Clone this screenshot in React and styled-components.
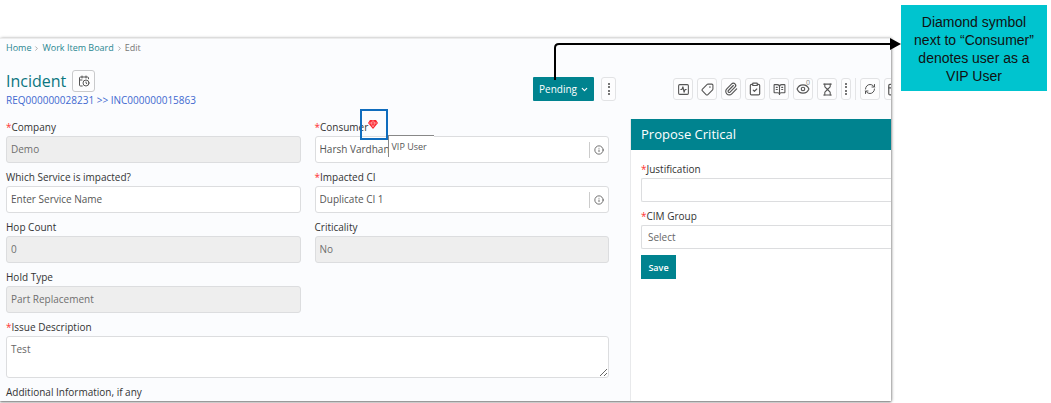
import React from 'react';
import styled, { createGlobalStyle } from 'styled-components';
import {
  SquareActivity, Tag, Paperclip, ClipboardCheck, BookOpenText, Eye, Hourglass,
  RefreshCw, CalendarDays, CalendarClock, ChevronDown, ChevronRight, Info,
} from 'lucide-react';

const teal = '#00838f';

const GlobalStyle = createGlobalStyle`
  * { box-sizing: border-box; }
  body { margin: 0; background: #fff; }
  body, input, textarea, select, button { font-family: "Open Sans", "Noto Sans", sans-serif; font-size: 10px; }
`;

const Page = styled.div`
  position: relative;
  display: grid;
  grid-template-columns: minmax(0, 1fr) 160px;
  align-items: start;
  overflow: hidden;
  padding-bottom: 2px;
`;

const Card = styled.main`
  margin-top: 38px;
  background: #fbfcfe;
  border-top: 1px solid #ececec;
  box-shadow: 0 1px 2px #777, 1px 0 3px #bbb;
  overflow: hidden;
`;

const Breadcrumb = styled.nav`
  display: flex;
  align-items: center;
  gap: 2px;
  padding: 2px 6px 0;
  line-height: 14px;
  font-size: 9px;
  color: #777;
`;

const Crumb = styled.a`
  color: #2a8791;
  text-decoration: none;
`;

const Header = styled.header`
  display: flex;
  align-items: flex-start;
  padding: 15px 0 11px 6px;
`;

const Heading = styled.div`
  flex: 1;
`;

const TitleRow = styled.div`
  display: flex;
  align-items: center;
  gap: 6px;
  height: 22px;
`;

const Title = styled.h1`
  margin: 0;
  font-size: 16px;
  font-weight: 400;
  color: #0b7680;
`;

const Reference = styled.a`
  display: block;
  line-height: 16px;
  color: #4169d0;
  text-decoration: none;
`;

const IconButton = styled.button`
  position: relative;
  display: flex;
  flex: none;
  align-items: center;
  justify-content: center;
  width: ${(p) => p.$width || 20}px;
  height: ${(p) => p.$height || 22}px;
  padding: 0;
  color: #555;
  background: #fdfdfe;
  border: 1px solid ${(p) => p.$border || '#e2e3e5'};
  border-radius: 3px;
`;

const StatusActions = styled.div`
  display: flex;
  gap: 7px;
  padding-top: 7px;
`;

const StatusButton = styled.button`
  display: flex;
  align-items: center;
  justify-content: space-between;
  width: 61px;
  height: 24px;
  padding: 0 5px 0 6px;
  color: #fff;
  background: ${teal};
  border: 0;
  border-radius: 1px;
  font-weight: 500;
`;

const Tools = styled.div`
  display: flex;
  gap: 4px;
  width: 218px;
  margin-left: 57px;
  padding-top: 8px;
  overflow: hidden;
`;

const Divider = styled.span`
  flex: none;
  width: 1px;
  background: #e4e5e7;
`;

const Count = styled.span`
  position: absolute;
  top: 0;
  right: 2px;
  font-size: 7px;
  line-height: 8px;
  color: #888;
`;

const Body = styled.div`
  display: flex;
`;

const Form = styled.form`
  display: grid;
  flex: 1;
  grid-template-columns: 1fr 1fr;
  gap: 6px 14px;
  padding: 0 21px 0 6px;
`;

const Field = styled.div`
  position: relative;
  grid-column: ${(p) => (p.$wide ? '1 / -1' : p.$first ? '1' : 'auto')};
`;

const Label = styled.label`
  display: flex;
  height: 17px;
  line-height: 16px;
  color: #333;
`;

const Star = styled.span`
  color: #f33;
`;

const Input = styled.input`
  display: block;
  width: 100%;
  height: 27px;
  padding: 0 4px 2px;
  color: #555;
  background: #fff;
  border: 1px solid #dcdddf;
  border-radius: 3px;
  &:disabled { background: #eee; color: #6e6e6e; }
`;

const LookupBox = styled.div`
  display: flex;
  align-items: center;
  height: 27px;
  background: #fff;
  border: 1px solid #dcdddf;
  border-radius: 3px;
`;

const LookupInput = styled.input`
  flex: 1;
  min-width: 0;
  padding: 0 4px 2px;
  color: #555;
  background: none;
  border: 0;
`;

const LookupButton = styled.button`
  display: flex;
  align-items: center;
  justify-content: center;
  width: 19px;
  height: 16px;
  padding: 0;
  color: #555;
  background: none;
  border: 0;
  border-left: 1px solid #ccc;
`;

const Area = styled.textarea`
  display: block;
  width: 100%;
  height: 42px;
  padding: 5px 4px;
  color: #666;
  background: #fff;
  border: 1px solid #dcdddf;
  border-radius: 3px;
`;

const Vip = styled.span`
  position: relative;
  display: flex;
  height: 12px;
`;

const Highlight = styled.span`
  position: absolute;
  inset: -10px -10px -9px -8px;
  border: 2px solid #0f6cbd;
  z-index: 2;
`;

const Tooltip = styled.span`
  position: absolute;
  top: 16px;
  left: 73px;
  z-index: 1;
  width: 46px;
  height: 22px;
  padding-left: 3px;
  line-height: 22px;
  font-size: 9px;
  color: #555;
  background: #fff;
  border-top: 1px solid #888;
  border-left: 1px solid #888;
`;

const Panel = styled.aside`
  width: 261px;
  background: #fff;
  border-left: 1px solid #e8e9eb;
`;

const PanelTitle = styled.h2`
  margin: 0;
  padding-left: 10px;
  font-size: 13px;
  font-weight: 400;
  line-height: 31px;
  color: #fff;
  background: ${teal};
`;

const PanelForm = styled.form`
  display: grid;
  gap: 6px;
  padding: 11px 0 0 10px;
`;

const PanelInput = styled.input`
  display: block;
  width: 100%;
  height: 24px;
  background: #fff;
  border: 1px solid #dcdddf;
  border-right: 0;
  border-radius: 2px 0 0 2px;
`;

const PanelSelect = styled.select`
  display: block;
  width: 100%;
  height: 24px;
  padding: 0 6px;
  appearance: none;
  color: #666;
  background: #fff;
  border: 1px solid #dcdddf;
  border-right: 0;
  border-radius: 2px 0 0 2px;
`;

const SaveButton = styled.button`
  justify-self: start;
  width: 35px;
  height: 24px;
  padding: 0;
  font-size: 9px;
  font-weight: 600;
  color: #fff;
  background: ${teal};
  border: 0;
`;

const Callout = styled.aside`
  margin: 5px 4px 0 10px;
  padding: 8px 12px 6px;
  font-family: "Liberation Sans", Arial, sans-serif;
  font-size: 14px;
  line-height: 18px;
  text-align: center;
  color: #111;
  background: #00c4cf;
`;

const Arrow = styled.svg`
  position: absolute;
  top: 36px;
  right: 150px;
  z-index: 3;
  pointer-events: none;
`;

function Gem() {
  return (
    <svg width="10" height="12" viewBox="0 0 20 24" role="img" aria-label="VIP">
      <path d="M4 2h12l4 6-10 12L0 8z" fill="#fb2530" />
      <path d="M2 8h16M6 8l4-5 4 5-4 8z" fill="none" stroke="#ffb0b0" strokeWidth="1.4" />
    </svg>
  );
}

function Dots() {
  return (
    <svg width="4" height="14" viewBox="0 0 4 14" fill="#777" aria-hidden="true">
      <path d="M1 1h2v2H1zM1 4h2v2H1zM1 8h2v2H1zM1 11h2v2H1z" />
    </svg>
  );
}

function TextField({ id, label, value, required, disabled, first }) {
  return (
    <Field $first={first}>
      <Label htmlFor={id}>{required && <Star>*</Star>}{label}</Label>
      <Input id={id} defaultValue={value} disabled={disabled} />
    </Field>
  );
}

function LookupField({ id, label, value, vip }) {
  return (
    <Field>
      <Label htmlFor={id}>
        <Star>*</Star>{label}
        {vip && <Vip><Gem /><Highlight /></Vip>}
      </Label>
      <LookupBox>
        <LookupInput id={id} defaultValue={value} />
        <LookupButton type="button" aria-label={`${label} details`}><Info size={10} /></LookupButton>
      </LookupBox>
      {vip && <Tooltip role="tooltip">VIP User</Tooltip>}
    </Field>
  );
}

const tools = [
  ['Activity', <SquareActivity size={13} />],
  ['Tags', <Tag size={13} transform="scale(-1 1)" />],
  ['Attachments', <Paperclip size={14} />],
  ['Tasks', <ClipboardCheck size={14} />],
  ['Knowledge', <BookOpenText size={13} />],
  ['Watchers', <><Eye size={14} /><Count>0</Count></>],
  ['Pending time', <Hourglass size={13} />],
];

export default function App() {
  return (
    <Page>
      <GlobalStyle />
      <Card>
        <Breadcrumb aria-label="Breadcrumb">
          <Crumb href="#home">Home</Crumb><ChevronRight size={7} />
          <Crumb href="#board">Work Item Board</Crumb><ChevronRight size={7} />
          <span>Edit</span>
        </Breadcrumb>
        <Header>
          <Heading>
            <TitleRow>
              <Title>Incident</Title>
              <IconButton $width={23} $border="#c9cacc" aria-label="Schedule"><CalendarClock size={12} /></IconButton>
            </TitleRow>
            <Reference href="#request">REQ000000028231 &gt;&gt; INC000000015863</Reference>
          </Heading>
          <StatusActions>
            <StatusButton>Pending<ChevronDown size={9} strokeWidth={3} /></StatusButton>
            <IconButton $width={15} $height={24} aria-label="More actions"><Dots /></IconButton>
          </StatusActions>
          <Tools>
            {tools.map(([name, icon]) => <IconButton key={name} aria-label={name}>{icon}</IconButton>)}
            <IconButton $width={10} aria-label="More tools"><Dots /></IconButton>
            <Divider />
            <IconButton aria-label="Refresh"><RefreshCw size={12} /></IconButton>
            <IconButton aria-label="Calendar"><CalendarDays size={14} /></IconButton>
          </Tools>
        </Header>
        <Body>
          <Form>
            <TextField id="company" label="Company" value="Demo" required disabled />
            <LookupField id="consumer" label="Consumer" value="Harsh Vardhan" vip />
            <TextField id="service" label="Which Service is impacted?" value="Enter Service Name" />
            <LookupField id="ci" label="Impacted CI" value="Duplicate CI 1" />
            <TextField id="hops" label="Hop Count" value="0" disabled />
            <TextField id="criticality" label="Criticality" value="No" disabled />
            <TextField id="hold" label="Hold Type" value="Part Replacement" disabled first />
            <Field $wide>
              <Label htmlFor="issue"><Star>*</Star>Issue Description</Label>
              <Area id="issue" defaultValue="Test" />
            </Field>
            <Field $wide><Label as="span">Additional Information, if any</Label></Field>
          </Form>
          <Panel>
            <PanelTitle>Propose Critical</PanelTitle>
            <PanelForm>
              <div>
                <Label htmlFor="justification"><Star>*</Star>Justification</Label>
                <PanelInput id="justification" />
              </div>
              <div>
                <Label htmlFor="group"><Star>*</Star>CIM Group</Label>
                <PanelSelect id="group"><option>Select</option></PanelSelect>
              </div>
              <SaveButton type="button">Save</SaveButton>
            </PanelForm>
          </Panel>
        </Body>
      </Card>
      <Callout>Diamond symbol next to “Consumer” denotes user as a VIP User</Callout>
      <Arrow width="350" height="46" viewBox="0 0 350 46" aria-hidden="true">
        <path d="M4 44V12Q4 8 8 8H340" fill="none" stroke="#000" strokeWidth="2" />
        <path d="M339 2l11 6-11 6z" />
      </Arrow>
    </Page>
  );
}
